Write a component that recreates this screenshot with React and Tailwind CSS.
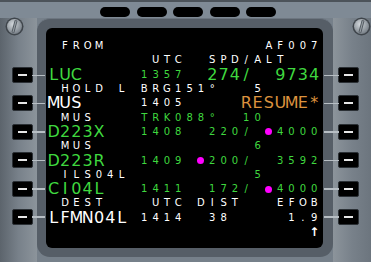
import React from "react";

// colour + size classes, written out in full so tailwind picks them up
const COLORS = {
  w: "text-white",
  g: "text-[#3fd83f]",
  o: "text-[#dc923e]",
};
const SIZES = {
  l: "text-[16px]",
  s: "text-[10px]",
};

// [startCol, text, colour, size]  ('m' = magenta constraint dot)
const LINES = [
  [[1, "FROM", "w", "s"], [19, "AF007", "w", "s"]],
  [[9, "UTC", "w", "s"], [14, "SPD/ALT", "w", "s"]],
  [[0, "LUC", "g", "l"], [8, "1357", "g", "s"], [14, "274/", "g", "l"], [20, "9734", "g", "l"]],
  [[1, "HOLD L", "w", "s"], [8, "BRG151°", "w", "s"], [18, "5", "w", "s"]],
  [[0, "MUS", "w", "l"], [8, "1405", "w", "s"], [17, "RESUME*", "o", "l"]],
  [[1, "MUS", "w", "s"], [8, "TRK088°", "g", "s"], [17, "10", "g", "s"]],
  [[0, "D223X", "g", "l"], [8, "1408", "g", "s"], [14, "220/", "g", "s"], [19, "•", "m", "s"], [20, "4000", "g", "s"]],
  [[1, "MUS", "w", "s"], [18, "6", "g", "s"]],
  [[0, "D223R", "g", "l"], [8, "1409", "g", "s"], [13, "•", "m", "s"], [14, "200/", "g", "s"], [20, "3592", "g", "s"]],
  [[1, "ILS04L", "w", "s"], [18, "5", "g", "s"]],
  [[0, "CI04L", "g", "l"], [8, "1411", "g", "s"], [14, "172/", "g", "s"], [19, "•", "m", "s"], [20, "4000", "g", "s"]],
  [[1, "DEST", "w", "s"], [9, "UTC", "w", "s"], [13, "DIST", "w", "s"], [20, "EFOB", "w", "s"]],
  [[0, "LFMN04L", "w", "l"], [8, "1414", "w", "s"], [14, "38", "w", "s"], [21, "1.9", "w", "s"]],
  [[23, "↑", "w", "s"]],
];

const Line = ({ segs }) => {
  const cells = Array(24).fill(null);
  segs.forEach(([col, text, color, size]) => {
    [...text].forEach((ch, i) => {
      cells[col + i] = { ch, color, size };
    });
  });
  return (
    <div className="flex h-[14.3px] items-center">
      {cells.map((c, i) => (
        <span key={i} className="w-[11.34px] shrink-0 flex justify-center items-center leading-none">
          {c && c.color === "m" ? (
            <span className="w-[7px] h-[7px] rounded-full bg-[#ff00ff]" />
          ) : c && c.ch === "↑" ? (
            <span className="text-white text-[12px] font-bold">↑</span>
          ) : c ? (
            <span className={`${COLORS[c.color]} ${SIZES[c.size]}`}>{c.ch === " " ? "\u00a0" : c.ch}</span>
          ) : null}
        </span>
      ))}
    </div>
  );
};

const Screw = () => (
  <svg width="19" height="19" viewBox="0 0 19 19">
    <defs>
      <radialGradient id="sg" cx="40%" cy="35%" r="70%">
        <stop offset="0%" stopColor="#d3d8dc" />
        <stop offset="100%" stopColor="#737b83" />
      </radialGradient>
    </defs>
    <circle cx="9.5" cy="9.5" r="9" fill="#3f454b" />
    <circle cx="9.5" cy="9.5" r="7.5" fill="url(#sg)" />
    <g transform="rotate(15 9.5 9.5)">
      <rect x="8" y="3" width="3" height="13" rx="1" fill="#555c63" />
      <rect x="9" y="3.5" width="1" height="12" fill="#9aa1a7" />
    </g>
  </svg>
);

const Key = ({ side }) => (
  <div className="relative w-[21px] h-[16px] bg-black rounded-[2px] border border-[#2b3035] flex items-center justify-center">
    <div className="w-[9px] h-[2px] bg-[#e6e6e6]" />
    {side === "left" ? (
      <div className="absolute left-full top-[6.5px] w-[13px] h-[1.5px] bg-[#b7bec4] z-10" />
    ) : (
      <div className="absolute right-full top-[6.5px] w-[15px] h-[1.5px] bg-[#b7bec4] z-10" />
    )}
  </div>
);

const keys = [0, 1, 2, 3, 4, 5];

export default function App() {
  return (
    <div
      className="w-[371px] h-[262px] bg-[#76808a] flex flex-col overflow-hidden"
      style={{ fontFamily: '"DejaVu Sans", "Liberation Sans", sans-serif' }}
    >
      {/* top strip with the annunciator slots */}
      <div className="h-[18px] shrink-0 bg-[#7f8a95] border-t-2 border-[#4c535a] flex gap-[6.5px] pl-[100px] pt-[5px]">
        {[0, 1, 2, 3, 4].map((i) => (
          <div key={i} className="w-[30px] h-[10px] rounded-[5px] bg-black" />
        ))}
      </div>

      <div className="flex h-[244px]">
        {/* left LSK column */}
        <div className="w-[37px] shrink-0 flex flex-col bg-linear-to-r from-[#5c646c] via-[#78818a] to-[#8c949b]">
          <div className="ml-[5px] -mt-[1px]">
            <Screw />
          </div>
          <div className="ml-[12px] mt-[31px] flex flex-col gap-[12.4px]">
            {keys.map((k) => (
              <Key key={k} side="left" />
            ))}
          </div>
        </div>

        {/* display frame */}
        <div className="w-[296px] h-[239px] shrink-0 rounded-[13px] bg-[#565e67] border-t border-[#6d7680] pt-[9px] pl-[9px]">
          <div className="w-[277px] h-[220px] bg-black rounded-[6px] pt-[11px] pl-[2px]">
            {LINES.map((segs, i) => (
              <Line key={i} segs={segs} />
            ))}
          </div>
        </div>

        {/* right LSK column */}
        <div className="flex-1 flex flex-col bg-linear-to-r from-[#8c949b] via-[#78818a] to-[#6c757e]">
          <div className="ml-[19px] -mt-[1px]">
            <Screw />
          </div>
          <div className="ml-[5px] mt-[31px] flex flex-col gap-[12.4px]">
            {keys.map((k) => (
              <Key key={k} side="right" />
            ))}
          </div>
        </div>
      </div>
    </div>
  );
}
